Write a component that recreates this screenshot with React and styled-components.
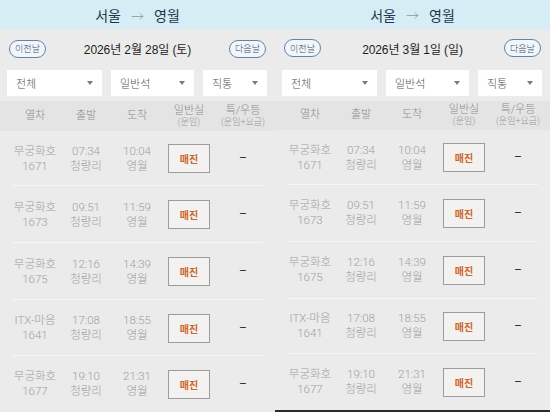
import React from "react";
import styled, { createGlobalStyle } from "styled-components";

const Global = createGlobalStyle`
  html, body { margin: 0; padding: 0; background: #ebebeb; }
  body { font-family: "Liberation Sans", "Noto Sans CJK KR", sans-serif; }
  * { box-sizing: border-box; }
`;

const lightStack = `"Roboto", "Noto Sans CJK KR", sans-serif`;

const Page = styled.div`
  display: flex;
  width: 550px;
  height: 412px;
  overflow: hidden;
`;

const Panel = styled.div`
  width: 275px;
  height: 412px;
  display: flex;
  flex-direction: column;
  background: #ebebeb;
  border-bottom: ${(p) => (p.$edge ? "2px solid #2b2b2b" : "none")};
`;

const TopBar = styled.div`
  height: 29px;
  background: #d6edf5;
  display: flex;
  align-items: center;
  justify-content: center;
  gap: 10px;
  font-size: 14px;
  color: #22334a;
  padding-top: 1px;
`;

const ArrowGlyph = styled.span`
  font-size: 13px;
  color: #8a9bad;
  font-family: ${lightStack};
  font-weight: 300;
`;

const DateRow = styled.div`
  height: 37px;
  display: flex;
  align-items: center;
  justify-content: space-between;
  padding: 2px 9px 0 9px;
`;

const DayButton = styled.button`
  width: 37px;
  height: 18px;
  border-radius: 9px;
  border: 1px solid #5f84ad;
  background: #f3f5f8;
  color: #2c4d78;
  font-family: inherit;
  font-size: 9px;
  font-weight: 300;
  padding: 0;
  display: flex;
  align-items: center;
  justify-content: center;
`;

const DateText = styled.div`
  font-size: 12px;
  color: #1d1d1d;
  letter-spacing: -0.1px;
`;

const SelectRow = styled.div`
  display: flex;
  gap: 9px;
  padding: 4px 8px 0 7px;
  height: 35px;
`;

const Select = styled.div`
  width: ${(p) => p.$w}px;
  height: 26px;
  background: #ffffff;
  display: flex;
  align-items: center;
  justify-content: space-between;
  padding: 0 9px 0 9px;
  font-size: 11px;
  font-weight: 300;
  color: #555;
`;

const Caret = styled.span`
  width: 0;
  height: 0;
  border-left: 3.5px solid transparent;
  border-right: 3.5px solid transparent;
  border-top: 4px solid #7a7a7a;
`;

const Grid = styled.div`
  display: grid;
  grid-template-columns: 50px 52px 50px 54px 54px;
  padding: 0 9px 0 10px;
  align-items: center;
  justify-items: center;
  text-align: center;
  font-family: ${lightStack};
  font-weight: 300;
`;

const HeadRow = styled(Grid)`
  height: 30px;
  background: #e4e4e4;
  color: #8c8c8c;
  font-size: 11px;
  line-height: 12px;
`;

const Sub = styled.div`
  font-size: 9px;
  line-height: 11px;
  color: #999;
  white-space: nowrap;
`;

const Row = styled(Grid)`
  height: ${(p) => p.$h}px;
  color: #a0a0a0;
  font-size: 11.5px;
  line-height: 15px;
  position: relative;
  &::after {
    content: "";
    display: ${(p) => (p.$last ? "none" : "block")};
    position: absolute;
    left: 13px;
    right: 12px;
    bottom: 0;
    height: 1px;
    background: #f6f6f6;
  }
`;

const SoldOut = styled.div`
  width: 42px;
  height: 29px;
  border: 1.5px solid #9c9c9c;
  background: #f4f2f1;
  color: #c9662e;
  font-family: "Noto Sans CJK KR", sans-serif;
  font-size: 10px;
  font-weight: bold;
  display: flex;
  align-items: center;
  justify-content: center;
`;

const Dash = styled.div`
  color: #333;
  font-size: 12px;
  font-weight: 400;
`;

const trains = [
  ["무궁화호", "1671", "07:34", "10:04"],
  ["무궁화호", "1673", "09:51", "11:59"],
  ["무궁화호", "1675", "12:16", "14:39"],
  ["ITX-마음", "1641", "17:08", "18:55"],
  ["무궁화호", "1677", "19:10", "21:31"],
];
const heights = [55, 57, 57, 56, 56];

function Schedule({ date, edge }) {
  return (
    <Panel $edge={edge}>
      <TopBar>
        <span>서울</span>
        <ArrowGlyph>→</ArrowGlyph>
        <span>영월</span>
      </TopBar>
      <DateRow>
        <DayButton>이전날</DayButton>
        <DateText>{date}</DateText>
        <DayButton>다음날</DayButton>
      </DateRow>
      <SelectRow>
        <Select $w={95}>
          전체 <Caret />
        </Select>
        <Select $w={83}>
          일반석 <Caret />
        </Select>
        <Select $w={64}>
          직통 <Caret />
        </Select>
      </SelectRow>
      <HeadRow>
        <div>열차</div>
        <div>출발</div>
        <div>도착</div>
        <div>
          일반실
          <Sub>(운임)</Sub>
        </div>
        <div>
          특/우등
          <Sub>(운임+요금)</Sub>
        </div>
      </HeadRow>
      {trains.map((t, i) => (
        <Row key={i} $h={heights[i]} $last={i === trains.length - 1}>
          <div>
            {t[0]}
            <br />
            {t[1]}
          </div>
          <div>
            {t[2]}
            <br />
            청량리
          </div>
          <div>
            {t[3]}
            <br />
            영월
          </div>
          <SoldOut>매진</SoldOut>
          <Dash>–</Dash>
        </Row>
      ))}
    </Panel>
  );
}

export default function App() {
  return (
    <Page>
      <Global />
      <Schedule date="2026년 2월 28일 (토)" />
      <Schedule date="2026년 3월 1일 (일)" edge />
    </Page>
  );
}
